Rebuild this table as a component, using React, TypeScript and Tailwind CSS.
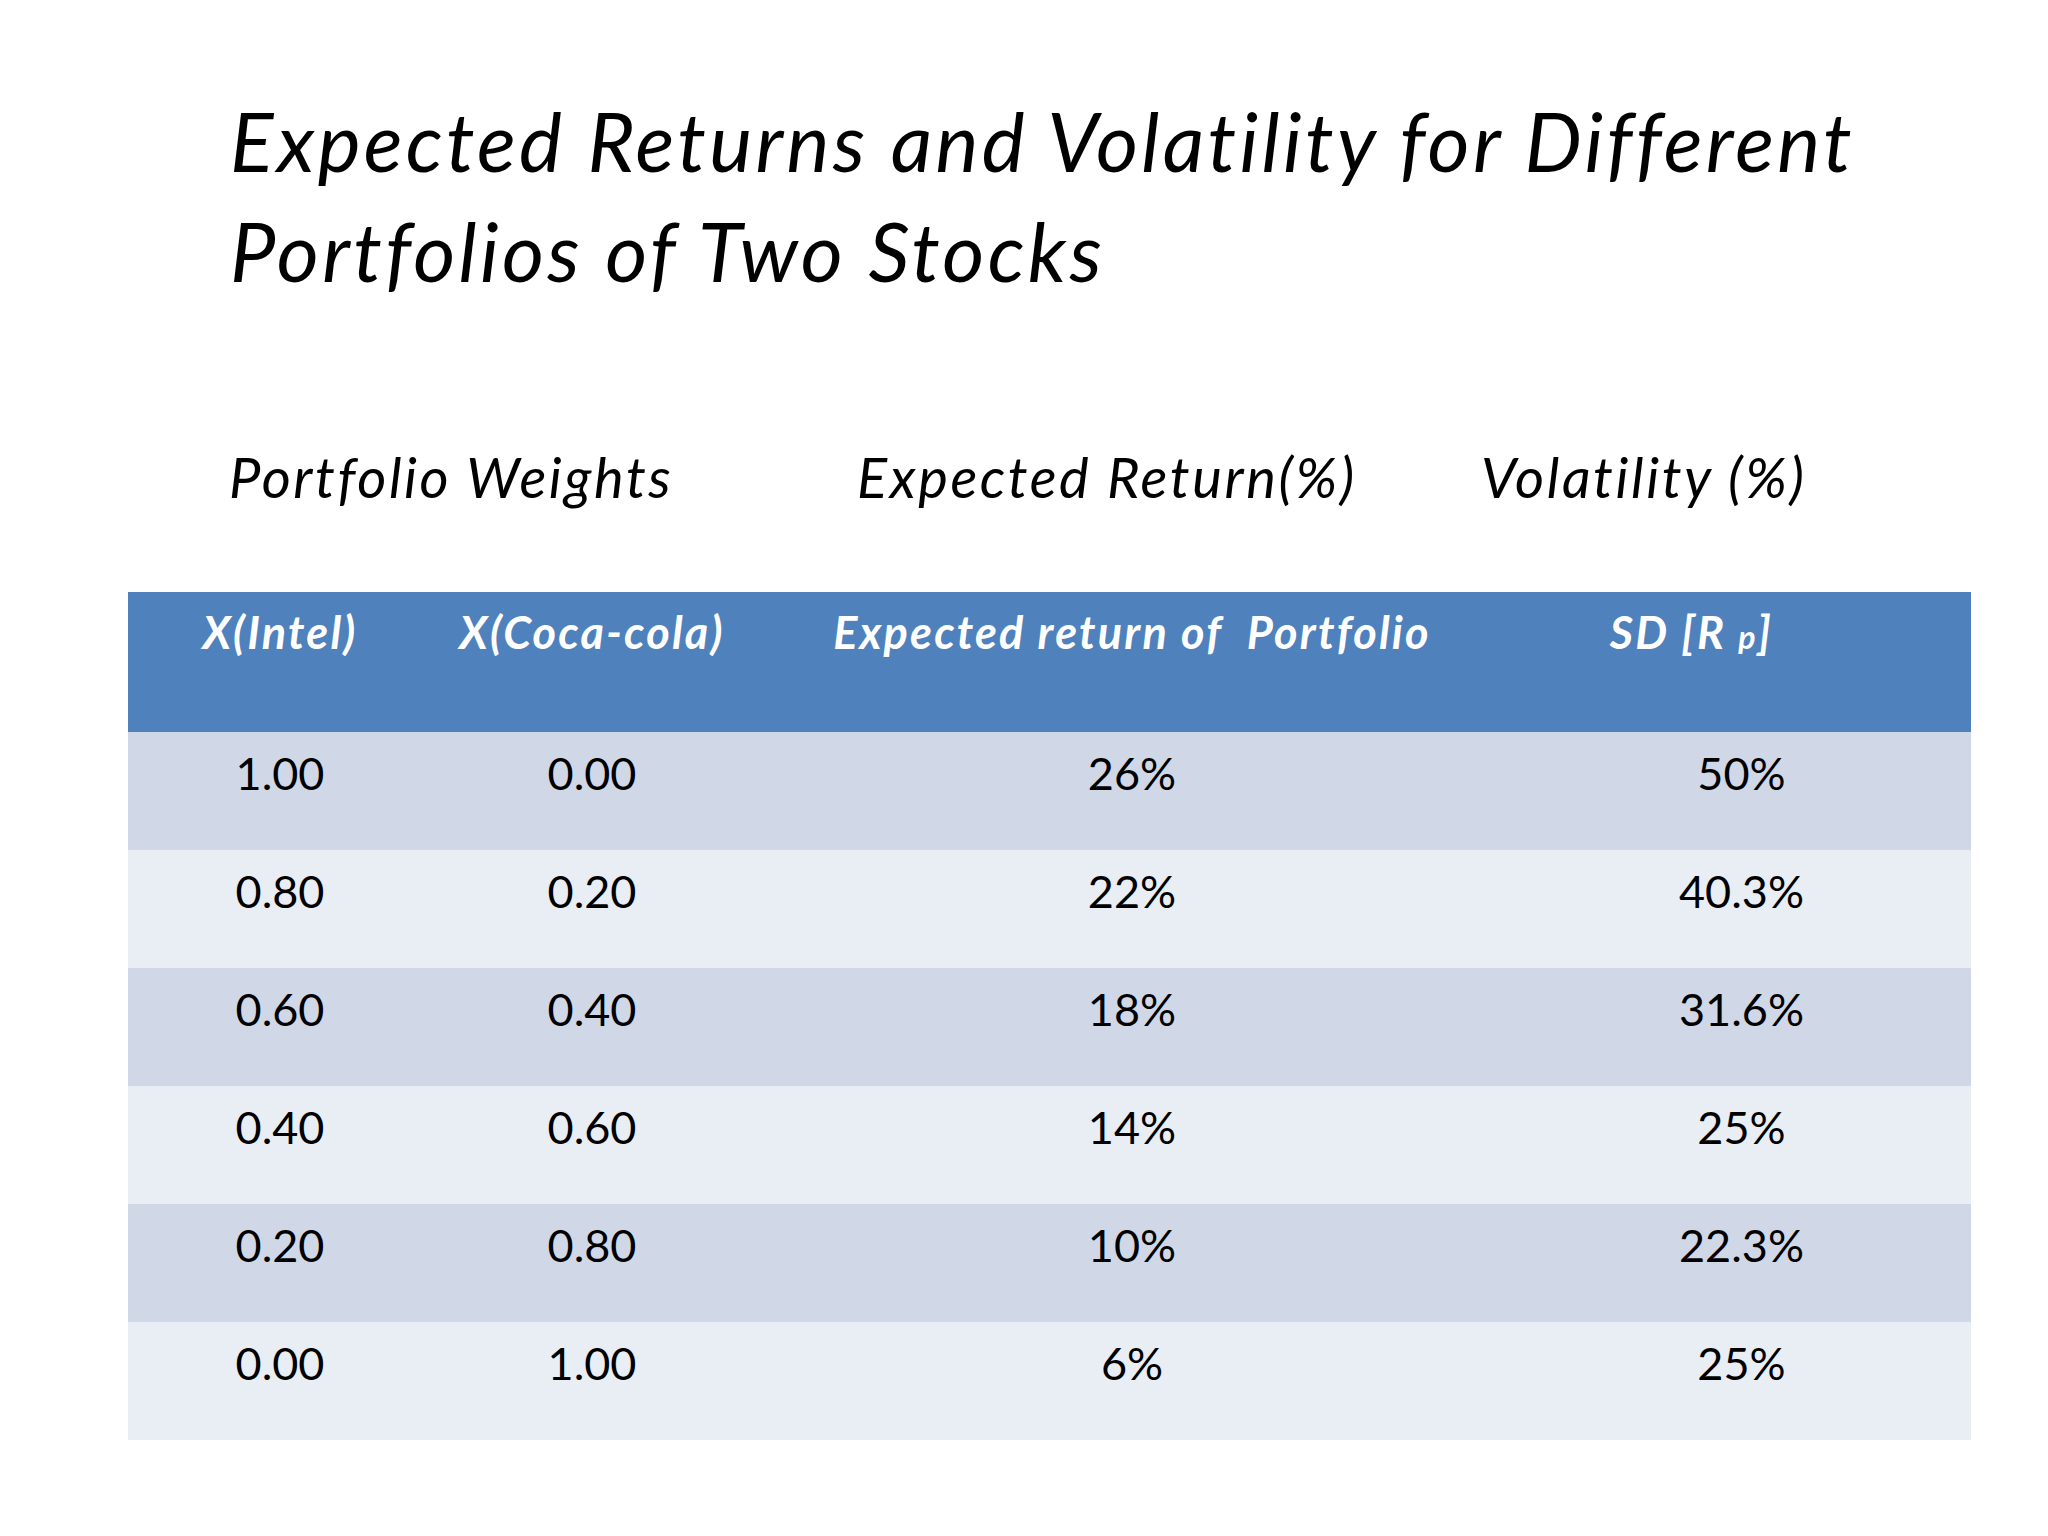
const rows = [
  ["1.00", "0.00", "26%", "50%"],
  ["0.80", "0.20", "22%", "40.3%"],
  ["0.60", "0.40", "18%", "31.6%"],
  ["0.40", "0.60", "14%", "25%"],
  ["0.20", "0.80", "10%", "22.3%"],
  ["0.00", "1.00", "6%", "25%"],
];

export default function App() {
  return (
    <div className="w-[2048px] h-[1536px] bg-white text-black font-['Lato',sans-serif] overflow-hidden">
      {/* title */}
      <h1 className="pl-[230px] pt-[86px] text-[81px] leading-[110px] italic font-normal tracking-[3.3px]">
        Expected Returns and Volatility for Different
        <br />
        Portfolios of Two Stocks
      </h1>

      {/* column group captions */}
      <div className="flex pl-[229px] mt-[137px] text-[56px] leading-[68px] italic tracking-[2.6px]">
        <div className="w-[628px]">Portfolio Weights</div>
        <div className="w-[624px]">Expected Return(%)</div>
        <div>Volatility (%)</div>
      </div>

      {/* table */}
      <div className="ml-[128px] mt-[81px] w-[1843px]">
        <div className="grid grid-cols-[304px_320px_760px_1fr] h-[140px] bg-[#4f81bd] text-white font-bold italic text-[45px] leading-[54px] pt-[13px] tracking-[2.2px]">
          <div className="text-center">X(Intel)</div>
          <div className="text-center">X(Coca-cola)</div>
          <div className="text-center whitespace-pre">Expected return of  Portfolio</div>
          <div className="text-center pr-[100px]">
            SD [R <span className="text-[32px]">p</span>]
          </div>
        </div>
        {rows.map((r, i) => (
          <div
            key={i}
            className={
              "grid grid-cols-[304px_320px_760px_1fr] h-[118px] text-[45px] leading-[54px] pt-[14px] " +
              (i % 2 === 0 ? "bg-[#d0d8e8]" : "bg-[#e9edf4]")
            }
          >
            <div className="text-center">{r[0]}</div>
            <div className="text-center">{r[1]}</div>
            <div className="text-center">{r[2]}</div>
            <div className="text-center">{r[3]}</div>
          </div>
        ))}
      </div>
    </div>
  );
}
